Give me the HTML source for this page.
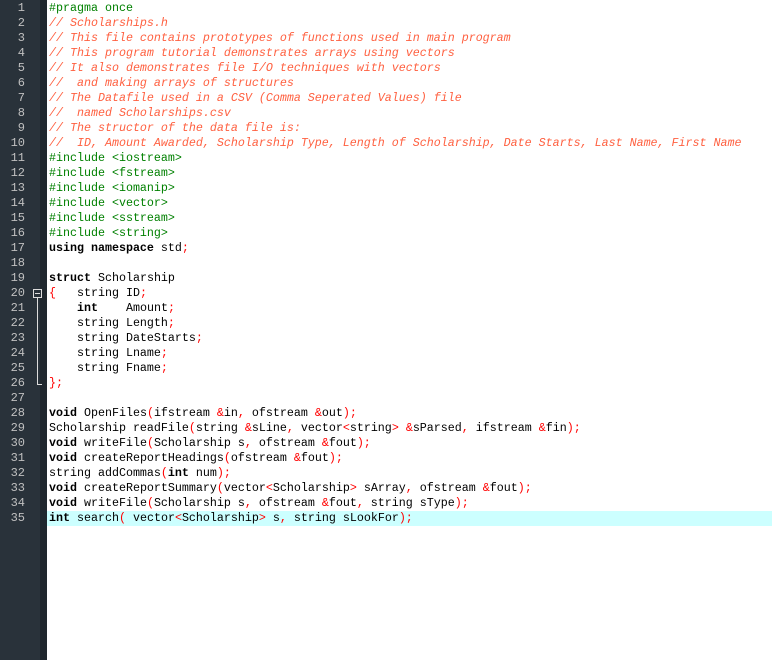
<!DOCTYPE html>
<html><head><meta charset="utf-8"><style>
body{margin:0;width:772px;height:660px;background:#fff;overflow:hidden;font-family:"Liberation Mono","DejaVu Sans Mono",monospace;font-size:11.67px;}
#g{position:absolute;left:0;top:0;width:40px;height:660px;background:#29323a;}
#g2{position:absolute;left:40px;top:0;width:7px;height:660px;background:#1f272e;}
.n{position:absolute;left:0;width:25px;text-align:right;color:#c0c0c0;height:15px;line-height:15px;font-size:12px;}
#code{position:absolute;left:49px;top:1px;}
.l{height:15px;line-height:15px;white-space:pre;color:#000;}
.hl{position:absolute;left:47px;top:511px;width:725px;height:15px;background:#ccffff;}
.c{color:#ff6040;font-style:italic}
.p{color:#008000}
.k{font-weight:bold}
.o{color:#ff0000}
#fold{position:absolute;left:33px;top:289px;width:9px;height:9px;border:1px solid #ddd;box-sizing:border-box;background:#29323a;}
#fold:after{content:"";position:absolute;left:1px;top:3px;width:5px;height:1px;background:#ddd;}
#fl{position:absolute;left:37px;top:298px;width:1px;height:87px;background:#ddd;}
#fl2{position:absolute;left:37px;top:384px;width:5px;height:1px;background:#ddd;}
</style></head><body>
<div id="g"></div><div id="g2"></div>
<div class="hl"></div>
<div id="fold"></div><div id="fl"></div><div id="fl2"></div>
<div class="n" style="top:1px">1</div><div class="n" style="top:16px">2</div><div class="n" style="top:31px">3</div><div class="n" style="top:46px">4</div><div class="n" style="top:61px">5</div><div class="n" style="top:76px">6</div><div class="n" style="top:91px">7</div><div class="n" style="top:106px">8</div><div class="n" style="top:121px">9</div><div class="n" style="top:136px">10</div><div class="n" style="top:151px">11</div><div class="n" style="top:166px">12</div><div class="n" style="top:181px">13</div><div class="n" style="top:196px">14</div><div class="n" style="top:211px">15</div><div class="n" style="top:226px">16</div><div class="n" style="top:241px">17</div><div class="n" style="top:256px">18</div><div class="n" style="top:271px">19</div><div class="n" style="top:286px">20</div><div class="n" style="top:301px">21</div><div class="n" style="top:316px">22</div><div class="n" style="top:331px">23</div><div class="n" style="top:346px">24</div><div class="n" style="top:361px">25</div><div class="n" style="top:376px">26</div><div class="n" style="top:391px">27</div><div class="n" style="top:406px">28</div><div class="n" style="top:421px">29</div><div class="n" style="top:436px">30</div><div class="n" style="top:451px">31</div><div class="n" style="top:466px">32</div><div class="n" style="top:481px">33</div><div class="n" style="top:496px">34</div><div class="n" style="top:511px">35</div>
<div id="code">
<div class="l p">#pragma once</div>
<div class="l c">// Scholarships.h</div>
<div class="l c">// This file contains prototypes of functions used in main program</div>
<div class="l c">// This program tutorial demonstrates arrays using vectors</div>
<div class="l c">// It also demonstrates file I/O techniques with vectors</div>
<div class="l c">//  and making arrays of structures</div>
<div class="l c">// The Datafile used in a CSV (Comma Seperated Values) file</div>
<div class="l c">//  named Scholarships.csv</div>
<div class="l c">// The structor of the data file is:</div>
<div class="l c">//  ID, Amount Awarded, Scholarship Type, Length of Scholarship, Date Starts, Last Name, First Name</div>
<div class="l p">#include &lt;iostream&gt;</div>
<div class="l p">#include &lt;fstream&gt;</div>
<div class="l p">#include &lt;iomanip&gt;</div>
<div class="l p">#include &lt;vector&gt;</div>
<div class="l p">#include &lt;sstream&gt;</div>
<div class="l p">#include &lt;string&gt;</div>
<div class="l"><span class="k">using namespace</span> std<span class="o">;</span></div>
<div class="l"> </div>
<div class="l"><span class="k">struct</span> Scholarship</div>
<div class="l"><span class="o">{</span>   string ID<span class="o">;</span></div>
<div class="l">    <span class="k">int</span>    Amount<span class="o">;</span></div>
<div class="l">    string Length<span class="o">;</span></div>
<div class="l">    string DateStarts<span class="o">;</span></div>
<div class="l">    string Lname<span class="o">;</span></div>
<div class="l">    string Fname<span class="o">;</span></div>
<div class="l"><span class="o">};</span></div>
<div class="l"> </div>
<div class="l"><span class="k">void</span> OpenFiles<span class="o">(</span>ifstream <span class="o">&amp;</span>in<span class="o">,</span> ofstream <span class="o">&amp;</span>out<span class="o">);</span></div>
<div class="l">Scholarship readFile<span class="o">(</span>string <span class="o">&amp;</span>sLine<span class="o">,</span> vector<span class="o">&lt;</span>string<span class="o">&gt;</span> <span class="o">&amp;</span>sParsed<span class="o">,</span> ifstream <span class="o">&amp;</span>fin<span class="o">);</span></div>
<div class="l"><span class="k">void</span> writeFile<span class="o">(</span>Scholarship s<span class="o">,</span> ofstream <span class="o">&amp;</span>fout<span class="o">);</span></div>
<div class="l"><span class="k">void</span> createReportHeadings<span class="o">(</span>ofstream <span class="o">&amp;</span>fout<span class="o">);</span></div>
<div class="l">string addCommas<span class="o">(</span><span class="k">int</span> num<span class="o">);</span></div>
<div class="l"><span class="k">void</span> createReportSummary<span class="o">(</span>vector<span class="o">&lt;</span>Scholarship<span class="o">&gt;</span> sArray<span class="o">,</span> ofstream <span class="o">&amp;</span>fout<span class="o">);</span></div>
<div class="l"><span class="k">void</span> writeFile<span class="o">(</span>Scholarship s<span class="o">,</span> ofstream <span class="o">&amp;</span>fout<span class="o">,</span> string sType<span class="o">);</span></div>
<div class="l"><span class="k">int</span> search<span class="o">(</span> vector<span class="o">&lt;</span>Scholarship<span class="o">&gt;</span> s<span class="o">,</span> string sLookFor<span class="o">);</span></div>
</div>
</body></html>
